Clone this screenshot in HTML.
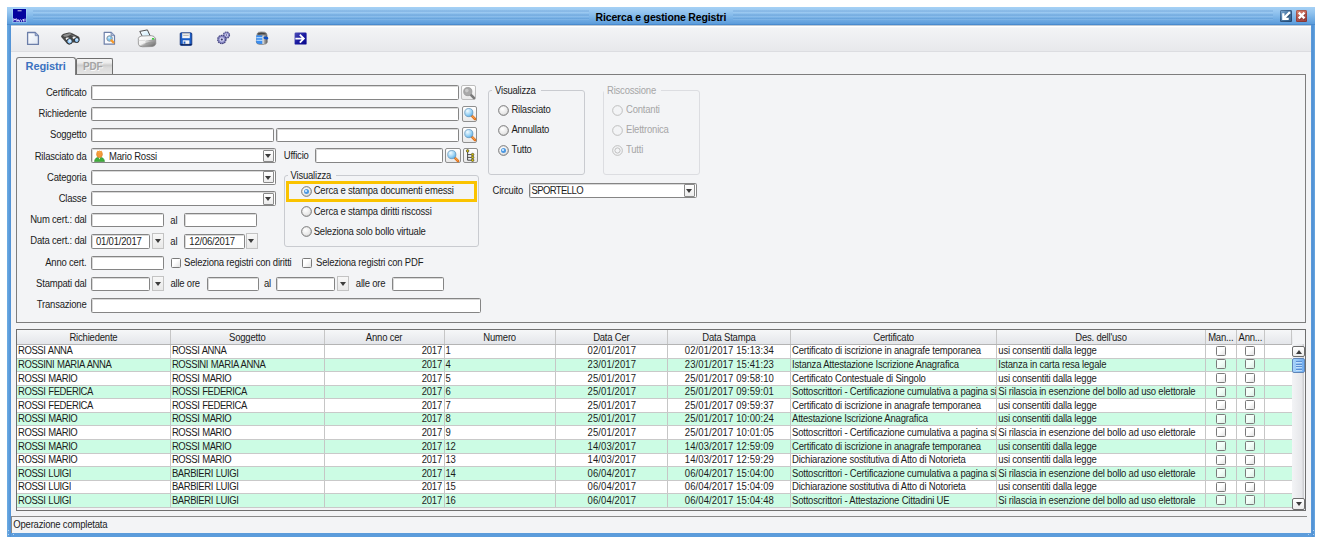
<!DOCTYPE html>
<html><head><meta charset="utf-8"><style>
*{margin:0;padding:0;box-sizing:border-box}
html,body{width:1328px;height:539px;overflow:hidden;background:#fff}
body{position:relative;font-family:"Liberation Sans",sans-serif;font-size:9.5px;letter-spacing:-0.2px;color:#1c1c1c}
.a{position:absolute}
.win{position:absolute;left:7px;top:7px;width:1308px;height:530px;background:linear-gradient(to right,#6eaee4,#5c9cdb 2px,#5494d6 3.5px,#5c9cdb 4px,#5c9cdb calc(100% - 4px),#4f8fd3 calc(100% - 2px),#6aaae2)}
.title{position:absolute;left:7px;top:7px;width:1308px;height:18.3px;background:linear-gradient(to bottom,#a6d1f5 0%,#93c4ef 30%,#79b2e6 60%,#5e9edc 92%,#3f80c6 100%)}
.stripe{position:absolute;height:2.2px;background:linear-gradient(to bottom,rgba(40,100,170,.13),rgba(40,100,170,.13) 55%,rgba(255,255,255,.08) 60%,rgba(255,255,255,.08))}
.ttext{position:absolute;top:11.9px;font-weight:bold;font-size:10.5px;letter-spacing:-0.15px;line-height:11px;color:#000;white-space:nowrap}
.content{position:absolute;left:11px;top:25.3px;width:1300px;height:508px;background:#f3f4f6}
.toolbar{position:absolute;left:11px;top:25px;width:1300px;height:27px;background:linear-gradient(to bottom,#a9b9c9 0,#c8d2dc 0.8px,#ffffff 1.2px,#ffffff 2.2px,#f3f4f6 2.6px,#e8e9ec 96%);border-bottom:1px solid #dcdde1}
.lbl{position:absolute;white-space:nowrap;line-height:11px;height:11px}
.r{text-align:right}
.tf{position:absolute;background:#fff;border:1px solid #858585;border-radius:1.5px;box-shadow:inset 1px 1px 0 #d8d8d8}
.tab{position:absolute}
.panel{position:absolute;border:1px solid #7d7d7d;background:#f3f4f6}
.grp{position:absolute;border:1px solid #c9cbd0;border-radius:3px}
.gt{position:absolute;background:#f3f4f6;padding:0 5px 0 3px;white-space:nowrap;line-height:11px}
.rad{position:absolute;width:11px;height:11px;border-radius:50%;border:1px solid #6f6f6f;background:radial-gradient(circle at 40% 35%,#fff,#e6e6e6 70%,#cfcfcf)}
.rad.sel::after{content:"";position:absolute;left:2px;top:2px;width:5px;height:5px;border-radius:50%;background:radial-gradient(circle at 40% 35%,#b9dcff,#3b8de0)}
.rad.dis{border-color:#b3b3b3;background:#f3f4f6}
.rad.dis.sel::after{background:none;border:1px solid #b3b3b3;left:1px;top:1px;width:7px;height:7px}
.dis{color:#a6a6a6}
.cbx{position:absolute;width:10px;height:10px;border:1px solid #7a7a7a;border-radius:1.5px;background:linear-gradient(135deg,#fff 40%,#e1e1e1)}
.dbtn{position:absolute;border:1px solid #c3c3c3;background:linear-gradient(to bottom,#f7f7f7,#e9e9e9)}
.cbtn{position:absolute;border:1px solid #8a8a8a;border-radius:1px;background:linear-gradient(to bottom,#ffffff,#ececec)}
.tri{position:absolute;width:0;height:0;border-left:3.5px solid transparent;border-right:3.5px solid transparent}
.tri.dn{border-top:4px solid #3c3c3c}
.tri.up{border-bottom:4px solid #3c3c3c}
.sbtn{position:absolute;border:1px solid #8f8f8f;border-radius:2px;background:linear-gradient(to bottom,#fff,#e9e9e9)}
.sbtn.dis2{border-color:#bdbdbd}
/* table */
.tbl{position:absolute;border:1px solid #6f6f6f;background:#f3f4f6;overflow:hidden}
.thead{position:absolute;background:linear-gradient(to bottom,#f6f7f8,#e4e6ea)}
.th{position:absolute;text-align:center;line-height:13.5px;padding-top:0.8px;white-space:nowrap;overflow:hidden}
.tr{position:absolute;left:0;background:#fff}
.tr.g{background:#ccfce4}
.td{position:absolute;white-space:nowrap;overflow:hidden;line-height:13.2px;padding:0 0.6px 0 1.5px}
.td.r{text-align:right;padding-right:2px}
.td.c{text-align:center;letter-spacing:0.1px}
.td.u{letter-spacing:-0.42px;word-spacing:0.6px}
.vl{position:absolute;width:1px;background:#c6c6c6}
.hl{position:absolute;left:0;height:1px;background:#c9c9c9}
.cb{position:absolute;width:10px;height:10px;border:1px solid #7a7a7a;border-radius:1.5px;background:linear-gradient(135deg,#fff 45%,#e3e3e3)}
.cbg{background:linear-gradient(135deg,#f3fff9 45%,#dcefe5)}
.sbtrack{position:absolute;background:linear-gradient(to right,#f3f4f6,#e6e7ea 80%,#c8c9cc)}
.sbbtn{position:absolute;width:12.3px;height:11.6px;border:1px solid #6e6e6e;border-radius:2px;background:linear-gradient(to bottom,#fff,#ececec)}
.sbbtn .tri{left:2.4px;top:3px;border-left-width:3.6px;border-right-width:3.6px}
.sbthumb{position:absolute;width:12.3px;height:14.6px;border:1px solid #5f86b8;border-radius:2px;background:linear-gradient(to right,#a8d4fb,#8cc2f4 50%,#6eaaf0)}
.sbthumb i{position:absolute;left:2.5px;width:6.5px;height:1px;background:#5b8fd2;box-shadow:0 1px 0 rgba(235,246,255,.55)}
.status{position:absolute;left:11.4px;top:516px;width:1295.6px;height:17.3px;border-top:1px solid #8a8a8a;border-left:1px solid #8a8a8a;background:#f3f4f6}
.lbl,.gt,.tf span{transform:scaleY(1.1)}
.td{transform:scaleY(1.1);transform-origin:50% 6.6px}
.th{transform:scaleY(1.1);transform-origin:50% 6.75px}

</style></head><body>
<div class="win"></div>
<div class="title"></div>
<div class="stripe" style="left:33px;top:10.4px;width:556px"></div>
<div class="stripe" style="left:733px;top:10.4px;width:540px"></div>
<div class="stripe" style="left:33px;top:14.4px;width:556px"></div>
<div class="stripe" style="left:733px;top:14.4px;width:540px"></div>
<div class="stripe" style="left:33px;top:18.3px;width:556px"></div>
<div class="stripe" style="left:733px;top:18.3px;width:540px"></div>
<!-- app icon -->
<div class="a" style="left:12px;top:8.2px;width:15px;height:15px;background:rgba(190,230,255,.35);border-radius:1px"></div>
<svg class="a" style="left:12.8px;top:8.9px" width="13.4" height="13.6" viewBox="0 0 13.4 13.6">
 <rect x="0" y="0" width="13.4" height="13.6" fill="#03039e"/>
 <rect x="4.6" y="1.2" width="4" height="1.1" fill="#b8b8e8"/>
 <path d="M0.8 12.6 V9.6 L2 11 L3.2 9.6 V12.6 M4.2 12.6 L5 10.4 L5.8 12.6 M6.6 12.8 Q6.4 10.6 7.6 10.6 M8.6 12.8 Q8.4 10.6 9.6 10.6 M10.6 12.6 V10 M12 12.6 V9.6" stroke="#e4dcff" stroke-width="1" fill="none"/>
</svg>
<div class="ttext" style="left:595.5px">Ricerca e gestione Registri</div>
<!-- title buttons -->
<div class="a" style="left:1280.1px;top:9.9px;width:11.7px;height:11.7px;border-radius:1.5px;background:linear-gradient(135deg,#86afd6 0%,#4d7aa6 45%,#2c5680 100%);box-shadow:inset 0 0 0 0.8px rgba(20,50,90,.55)"></div>
<svg class="a" style="left:1280.1px;top:9.9px" width="11.7" height="11.7" viewBox="0 0 12 12">
 <path d="M9.6 3.4 L5 8" stroke="#1d3550" stroke-width="2.2" fill="none" opacity=".6" transform="translate(0.6,0.6)"/>
 <path d="M9.4 3 L4.6 7.8 M3.4 4.6 V9 H7.8" stroke="#fff" stroke-width="2.3" fill="none" stroke-linecap="square"/>
</svg>
<div class="a" style="left:1295.9px;top:10.1px;width:11.6px;height:11.5px;border-radius:1.5px;background:linear-gradient(160deg,#e0886e 0%,#b85a50 50%,#96403e 100%);box-shadow:inset 0 0 0 0.8px rgba(100,30,30,.45)"></div>
<svg class="a" style="left:1295.9px;top:10.1px" width="11.6" height="11.5" viewBox="0 0 12 12">
 <path d="M3 3.2 L9 9.2 M9 3.2 L3 9.2" stroke="#4a1a1a" stroke-width="2.2" fill="none" opacity=".4" transform="translate(0.5,0.6)"/>
 <path d="M2.8 2.8 L8.8 8.8 M8.8 2.8 L2.8 8.8" stroke="#fff" stroke-width="2.4" fill="none"/>
</svg>

<div class="content"></div>
<div class="toolbar"></div>
<svg class="a" style="left:26px;top:31px" width="14" height="15" viewBox="0 0 14 15">
 <defs><linearGradient id="pg" x1="0" y1="0" x2="1" y2="1"><stop offset="0" stop-color="#ffffff"/><stop offset="1" stop-color="#dfe7f3"/></linearGradient></defs>
 <path d="M1.6 1.5 H9.2 L12.4 4.7 V13.4 H1.6 Z" fill="url(#pg)" stroke="#6b7ea9" stroke-width="1.3" stroke-linejoin="round"/>
 <path d="M9.2 1.5 V4.7 H12.4" fill="#9fb0d3" stroke="#6b7ea9" stroke-width="0.8"/>
</svg>
<svg class="a" style="left:58px;top:30px" width="25" height="18" viewBox="0 0 25 18">
 <path d="M3 6.8 Q3.2 4.6 5.6 3.8 L10.8 2.6 Q12.6 2.3 14.2 3.2 L20.6 6.6 Q22 7.6 21.6 9.6 L20.8 12 Q19.6 13 17.6 12.6 L14 12.6 L13.6 13.6 Q12 14.8 10 14.2 Q8.6 13.6 8 12.6 Z" fill="#464646"/>
 <path d="M5 5.6 Q6 4.4 10.6 3.4 Q12.6 3.1 14 4 L9.2 6.4 Q7.6 7.2 5.8 6.6 Z" fill="#8e8e8e"/>
 <path d="M12.6 4.8 L16.6 5.6 L15.2 6.6 Z" fill="#777"/>
 <ellipse cx="9.6" cy="8.8" rx="2" ry="1.3" fill="#f4f4f4"/>
 <ellipse cx="16.4" cy="7.8" rx="1.9" ry="1.2" fill="#f0f0f0"/>
 <circle cx="11.6" cy="11.3" r="2.7" fill="#93c8f7" stroke="#262626" stroke-width="0.9"/>
 <circle cx="18.7" cy="10.1" r="2.4" fill="#93c8f7" stroke="#262626" stroke-width="0.9"/>
 <circle cx="11.9" cy="10.8" r="1.2" fill="#d6edff"/>
 <circle cx="19" cy="9.6" r="1" fill="#d6edff"/>
</svg>
<svg class="a" style="left:103px;top:31.3px" width="13" height="14.5" viewBox="0 0 13 14.5">
 <path d="M1.2 1.3 H8 L11.5 4.6 V13.2 H1.2 Z" fill="#fbfcff" stroke="#6d7fa8" stroke-width="1.2" stroke-linejoin="round"/>
 <path d="M8 1.3 V4.6 H11.5" fill="#a7b5d4" stroke="#6d7fa8" stroke-width="0.7"/>
 <circle cx="6.6" cy="7.5" r="2.8" fill="#7fc6f0" stroke="#8a8f96" stroke-width="0.9"/>
 <circle cx="6.1" cy="6.8" r="1" fill="#d6f0ff"/>
 <path d="M8.4 9.4 L10.4 11.4" stroke="#f59a2c" stroke-width="2.2" stroke-linecap="round"/>
</svg>
<svg class="a" style="left:134px;top:27px" width="26" height="22" viewBox="0 0 26 22">
 <defs>
  <linearGradient id="prg" x1="0.1" y1="0" x2="0.9" y2="1"><stop offset="0" stop-color="#ffffff"/><stop offset="0.5" stop-color="#f0f0f0"/><stop offset="0.62" stop-color="#a8a8a8"/><stop offset="1" stop-color="#6a6a6a"/></linearGradient>
  <linearGradient id="ppg" x1="0" y1="0" x2="1" y2="1"><stop offset="0" stop-color="#ffffff"/><stop offset="1" stop-color="#bfe6fa"/></linearGradient>
 </defs>
 <path d="M5.8 4.4 L13.4 2.9 L16.6 9.8 L9.2 11.2 Z" fill="url(#ppg)" stroke="#3c3c3c" stroke-width="0.9" stroke-linejoin="round"/>
 <path d="M4.3 11.6 Q4.6 9.4 7.4 9.1 L17.2 8.6 Q20.6 8.8 21.6 11.6 L21.8 16.6 Q21.4 19 18.6 19.5 L8.6 19.8 Q4.8 19.8 4.4 17.2 Z" fill="url(#prg)" stroke="#8a8a8a" stroke-width="0.8"/>
 <path d="M11.5 14.2 L21.7 12.6 M11.5 16.4 L21.6 15.2" stroke="#8f8f8f" stroke-width="0.6"/>
 <path d="M4.6 13.6 L11.2 13.4" stroke="#cfcfcf" stroke-width="0.6"/>
 <rect x="18" y="11" width="2" height="1.6" fill="#3ad43a"/>
</svg>
<svg class="a" style="left:178.8px;top:31.5px" width="14" height="14" viewBox="0 0 14 14">
 <path d="M1.2 1.8 Q1.2 0.8 2.2 0.8 H11.6 Q12.8 0.8 12.8 2 V12.4 Q12.8 13.4 11.8 13.4 H2.2 Q1.2 13.4 1.2 12.4 Z" fill="#1c5fc9" stroke="#0c2a70" stroke-width="0.8"/>
 <rect x="3.2" y="1.2" width="7.6" height="5" fill="#f4f4f4"/>
 <rect x="3.2" y="1.2" width="7.6" height="1" fill="#b8b8b8"/>
 <rect x="4.2" y="3.2" width="5.5" height="0.8" fill="#aaa"/>
 <rect x="3.8" y="8.3" width="6.6" height="4.6" fill="#f7f7f7"/>
 <rect x="4.6" y="9.5" width="1.8" height="2.2" fill="#1c5fc9"/>
 <path d="M1.6 12.4 H12.6" stroke="#0a1f55" stroke-width="1"/>
</svg>
<svg class="a" style="left:212px;top:28px" width="24" height="20" viewBox="0 0 24 20">
 <circle cx="14.4" cy="7.1" r="2.9" fill="#8080bc" stroke="#4c4c86" stroke-width="1.6" stroke-dasharray="1.4 0.6"/>
 <circle cx="14.4" cy="7.1" r="2.5" fill="#8e8ec8"/>
 <circle cx="14.4" cy="7.1" r="1.7" fill="#d8d8f6"/>
 <circle cx="14.4" cy="7.1" r="0.75" fill="#4a4a80"/>
 <circle cx="9.8" cy="11.5" r="3.9" fill="#7878b6" stroke="#464680" stroke-width="1.7" stroke-dasharray="1.5 0.6"/>
 <circle cx="9.8" cy="11.5" r="3.4" fill="#8888c4"/>
 <circle cx="9.8" cy="11.5" r="2.3" fill="#d4d4f4"/>
 <circle cx="9.8" cy="11.5" r="1.05" fill="#363660"/>
</svg>
<svg class="a" style="left:252px;top:28px" width="20" height="20" viewBox="0 0 20 20">
 <defs><linearGradient id="dg" x1="0" y1="0" x2="1" y2="0"><stop offset="0" stop-color="#c8c8c8"/><stop offset="1" stop-color="#5e5e5e"/></linearGradient></defs>
 <path d="M5.2 5.6 Q5.8 4 9 4 L12.5 4.2 Q14.8 4.8 15 7 L15.2 14.5 Q14.5 16.3 11 16.3 L7 16.2 Q4.5 16 4.3 14 Z" fill="#8a8a8a" stroke="#5a5a5a" stroke-width="0.6"/>
 <path d="M6 5.2 Q9 4.4 13.6 5.2 L13.8 6.6 Q9.5 6.1 6.2 6.7 Z" fill="#444"/>
 <path d="M11 7.6 L15 7 L15.2 14.5 Q14.5 16 11 16.1 Z" fill="url(#dg)"/>
 <path d="M4.3 7.2 L10.6 7.6 L10.6 16 L6 15.8 Q4.4 15.4 4.3 14 Z" fill="#3a8ef2"/>
 <path d="M4.4 9.7 H10.5 M4.4 12.3 H10.5" stroke="#d6ecff" stroke-width="0.9"/>
 <path d="M10.9 7.6 V15.9" stroke="#efefef" stroke-width="0.9"/>
 <ellipse cx="13.9" cy="9.9" rx="2.5" ry="1.4" transform="rotate(12 13.9 9.9)" fill="#0b4fc7"/>
</svg>
<svg class="a" style="left:293.6px;top:31.5px" width="13" height="13" viewBox="0 0 13 13">
 <defs><linearGradient id="eg" x1="0" y1="0" x2="1" y2="1"><stop offset="0" stop-color="#5050b8"/><stop offset="0.5" stop-color="#1a1aa0"/><stop offset="1" stop-color="#06068a"/></linearGradient></defs>
 <rect x="0.6" y="0.6" width="12" height="12" rx="1.2" fill="url(#eg)"/>
 <path d="M2.3 6.6 H9.4 M6.5 3.3 L9.8 6.6 L6.5 9.9" stroke="#fff" stroke-width="1.9" fill="none" stroke-linecap="square"/>
</svg>


<!-- tabs -->
<div class="a" style="left:75.5px;top:58px;width:37.2px;height:16px;border:1px solid #6f6f6f;border-top-width:1.5px;border-bottom:none;border-radius:2px 2px 0 0;background:linear-gradient(to bottom,#f4f4f4 0%,#ececec 25%,#cdcdcd 42%,#dcdcdc 60%,#e4e4e4 100%)"></div>
<div class="a" style="left:83px;top:60.5px;font-weight:bold;font-size:10px;color:#a4a4a4;text-shadow:0.8px 0.8px 0 #fafafa;line-height:11px">PDF</div>
<div class="panel" style="left:16px;top:74px;width:1290px;height:249px"></div>
<div class="a" style="left:16px;top:57px;width:60px;height:18px;border:1px solid #7d7d7d;border-bottom:none;border-radius:3px 3px 0 0;background:#f3f4f6"></div>
<div class="a" style="left:25.6px;top:59.6px;font-weight:bold;font-size:11px;letter-spacing:-0.1px;color:#3b72c0;line-height:12px">Registri</div>

<div class="lbl r " style="right:1241.5px;top:87.05px">Certificato</div>
<div class="lbl r " style="right:1241.5px;top:108.25px">Richiedente</div>
<div class="lbl r " style="right:1241.5px;top:129.45px">Soggetto</div>
<div class="lbl r " style="right:1241.5px;top:150.65px">Rilasciato da</div>
<div class="lbl r " style="right:1241.5px;top:171.85px">Categoria</div>
<div class="lbl r " style="right:1241.5px;top:193.05px">Classe</div>
<div class="lbl r " style="right:1241.5px;top:214.25px">Num cert.: dal</div>
<div class="lbl r " style="right:1241.5px;top:235.45px">Data cert.: dal</div>
<div class="lbl r " style="right:1241.5px;top:256.65px">Anno cert.</div>
<div class="lbl r " style="right:1241.5px;top:277.85px">Stampati dal</div>
<div class="lbl r " style="right:1241.5px;top:299.05px">Transazione</div>
<div class="tf" style="left:91px;top:85.3px;width:368px;height:14.5px"></div>
<div class="sbtn dis2" style="left:461px;top:84.7px;width:14.7px;height:15.8px"><svg width="14" height="14" viewBox="0 0 14 14" style="position:absolute;left:0px;top:0px"><path d="M8.4 8.4 L12 12" stroke="#7a7a7a" stroke-width="2.5" stroke-linecap="round"/><circle cx="5.8" cy="5.6" r="4.1" fill="#a9a9a9" stroke="#8c8c8c" stroke-width="0.7"/><circle cx="4.8" cy="4.6" r="1.8" fill="#c9c9c9"/></svg></div>
<div class="tf" style="left:91px;top:106.5px;width:368.4px;height:14.5px"></div>
<div class="sbtn" style="left:461.5px;top:106px;width:15.3px;height:15.8px"><svg width="14" height="14" viewBox="0 0 14 14" style="position:absolute;left:0px;top:0px"><defs><radialGradient id="mgl" cx="0.35" cy="0.3" r="0.75"><stop offset="0" stop-color="#f2fbff"/><stop offset="0.55" stop-color="#a6d8f6"/><stop offset="1" stop-color="#5aaee6"/></radialGradient></defs><path d="M8.4 8.4 L12 12" stroke="#e2731c" stroke-width="2.5" stroke-linecap="round"/><path d="M8.9 8.6 L11.6 11.3" stroke="#ffb766" stroke-width="0.8" stroke-linecap="round"/><circle cx="5.8" cy="5.6" r="4.1" fill="url(#mgl)" stroke="#5b8fb8" stroke-width="0.7"/></svg></div>
<div class="tf" style="left:91px;top:127.7px;width:183px;height:14.5px"></div>
<div class="tf" style="left:276.4px;top:127.7px;width:183px;height:14.5px"></div>
<div class="sbtn" style="left:461.5px;top:127.3px;width:15.3px;height:15.5px"><svg width="14" height="14" viewBox="0 0 14 14" style="position:absolute;left:0px;top:0px"><defs><radialGradient id="mgl" cx="0.35" cy="0.3" r="0.75"><stop offset="0" stop-color="#f2fbff"/><stop offset="0.55" stop-color="#a6d8f6"/><stop offset="1" stop-color="#5aaee6"/></radialGradient></defs><path d="M8.4 8.4 L12 12" stroke="#e2731c" stroke-width="2.5" stroke-linecap="round"/><path d="M8.9 8.6 L11.6 11.3" stroke="#ffb766" stroke-width="0.8" stroke-linecap="round"/><circle cx="5.8" cy="5.6" r="4.1" fill="url(#mgl)" stroke="#5b8fb8" stroke-width="0.7"/></svg></div>
<div class="tf" style="left:91px;top:148.4px;width:185.1px;height:14.5px"><svg width="11" height="12" viewBox="0 0 11 12" style="position:absolute;left:2px;top:0.5px"><path d="M0.5 11.5 Q0.8 7.3 5.5 7.2 Q10.2 7.3 10.5 11.5 Z" fill="#3fae3a" stroke="#2a8a2a" stroke-width="0.6"/><path d="M4.6 7.3 L5.5 9.5 L6.4 7.3 Z" fill="#fff"/><ellipse cx="5.5" cy="4.3" rx="2.9" ry="3.2" fill="#f49a3a" stroke="#d9781c" stroke-width="0.6"/><path d="M2.6 2.6 L3.4 0.6 L4.6 1.8 L5.5 0.5 L6.4 1.8 L7.6 0.6 L8.4 2.6 Z" fill="#f7a84a"/></svg><span style="position:absolute;left:17px;top:1.2px;line-height:11px">Mario Rossi</span></div>
<div class="cbtn" style="left:263.1px;top:149.7px;width:11.3px;height:11.9px"><div class="tri dn" style="left:1.15px;top:3.45px"></div></div>
<div class="lbl " style="left:283.8px;top:150.15px">Ufficio</div>
<div class="tf" style="left:314.6px;top:148.4px;width:128.8px;height:14.5px"></div>
<div class="sbtn" style="left:445.3px;top:147.8px;width:15.3px;height:15px"><svg width="14" height="14" viewBox="0 0 14 14" style="position:absolute;left:0px;top:0px"><defs><radialGradient id="mgl" cx="0.35" cy="0.3" r="0.75"><stop offset="0" stop-color="#f2fbff"/><stop offset="0.55" stop-color="#a6d8f6"/><stop offset="1" stop-color="#5aaee6"/></radialGradient></defs><path d="M8.4 8.4 L12 12" stroke="#e2731c" stroke-width="2.5" stroke-linecap="round"/><path d="M8.9 8.6 L11.6 11.3" stroke="#ffb766" stroke-width="0.8" stroke-linecap="round"/><circle cx="5.8" cy="5.6" r="4.1" fill="url(#mgl)" stroke="#5b8fb8" stroke-width="0.7"/></svg></div>
<div class="sbtn" style="left:462.6px;top:147.8px;width:15px;height:15px"><svg width="13" height="13" viewBox="0 0 13 13" style="position:absolute;left:0.5px;top:0.5px"><path d="M3.6 2.5 V11.2 M3.6 5.6 H7.5 M3.6 8.4 H7.5 M3.6 11.2 H7.5" stroke="#3a3a3a" stroke-width="0.9" fill="none"/><circle cx="3.6" cy="1.9" r="1.3" fill="#d8c200" stroke="#333" stroke-width="0.6"/><circle cx="8.6" cy="5.6" r="1.3" fill="#d8c200" stroke="#333" stroke-width="0.6"/><circle cx="8.6" cy="8.4" r="1.3" fill="#d8c200" stroke="#333" stroke-width="0.6"/><circle cx="8.6" cy="11.2" r="1.3" fill="#d8c200" stroke="#333" stroke-width="0.6"/></svg></div>
<div class="tf" style="left:91px;top:170.1px;width:185.1px;height:14.7px"></div>
<div class="cbtn" style="left:263.1px;top:171.4px;width:11.3px;height:12.1px"><div class="tri dn" style="left:1.15px;top:3.55px"></div></div>
<div class="tf" style="left:91px;top:191.3px;width:185.1px;height:14.9px"></div>
<div class="cbtn" style="left:263.1px;top:192.6px;width:11.3px;height:12.3px"><div class="tri dn" style="left:1.15px;top:3.65px"></div></div>
<div class="tf" style="left:91px;top:212.9px;width:72.6px;height:14.5px"></div>
<div class="lbl " style="left:170.3px;top:214.65px">al</div>
<div class="tf" style="left:184.3px;top:212.9px;width:73px;height:14.5px"></div>
<div class="tf" style="left:91px;top:233.8px;width:59.4px;height:14.8px"><span style="position:absolute;left:4px;top:1.5px;line-height:11px">01/01/2017</span></div>
<div class="dbtn" style="left:152.3px;top:233.4px;width:11.5px;height:15.4px"><div class="tri dn" style="left:1.25px;top:4.7px"></div></div>
<div class="lbl " style="left:170.3px;top:235.55px">al</div>
<div class="tf" style="left:184.3px;top:233.8px;width:60.3px;height:14.8px"><span style="position:absolute;left:4px;top:1.5px;line-height:11px">12/06/2017</span></div>
<div class="dbtn" style="left:246px;top:233.4px;width:11.5px;height:15.4px"><div class="tri dn" style="left:1.25px;top:4.7px"></div></div>
<div class="tf" style="left:91px;top:255.5px;width:72.6px;height:14.5px"></div>
<div class="cbx" style="left:171px;top:257.5px"></div>
<div class="lbl " style="left:184px;top:257.25px">Seleziona registri con diritti</div>
<div class="cbx" style="left:302.4px;top:257.5px"></div>
<div class="lbl " style="left:316px;top:257.25px">Seleziona registri con PDF</div>
<div class="tf" style="left:91px;top:276.6px;width:59.4px;height:14.7px"></div>
<div class="dbtn" style="left:152.3px;top:276.4px;width:11.5px;height:15.1px"><div class="tri dn" style="left:1.25px;top:4.55px"></div></div>
<div class="lbl " style="left:170.4px;top:278.15px">alle ore</div>
<div class="tf" style="left:206.6px;top:276.6px;width:52.2px;height:14.7px"></div>
<div class="lbl " style="left:263.9px;top:278.15px">al</div>
<div class="tf" style="left:276.3px;top:276.6px;width:59.2px;height:14.7px"></div>
<div class="dbtn" style="left:337.3px;top:276.4px;width:11.7px;height:15.1px"><div class="tri dn" style="left:1.35px;top:4.55px"></div></div>
<div class="lbl " style="left:355.8px;top:278.15px">alle ore</div>
<div class="tf" style="left:392px;top:276.6px;width:52.3px;height:14.7px"></div>
<div class="tf" style="left:91px;top:297.5px;width:389.5px;height:15px"></div>
<div class="grp" style="left:283.5px;top:174.5px;width:195.5px;height:72.5px"></div>
<div class="gt" style="left:287.5px;top:169.5px">Visualizza</div>
<div class="a" style="left:286.2px;top:181px;width:191px;height:20.6px;border:3px solid #fac300"></div>
<svg class="a" style="left:300.8px;top:185.7px" width="11" height="11" viewBox="0 0 11 11"><defs><radialGradient id="rg0" cx="0.4" cy="0.35" r="0.7"><stop offset="0" stop-color="#ffffff"/><stop offset="0.7" stop-color="#e8e8e8"/><stop offset="1" stop-color="#cfcfcf"/></radialGradient></defs><circle cx="5.5" cy="5.5" r="4.85" fill="url(#rg0)" stroke="#6a6a6a" stroke-width="0.9"/><circle cx="5.5" cy="5.5" r="2.5" fill="#4b97e0"/><circle cx="5" cy="4.9" r="1.2" fill="#bfe0ff"/></svg>
<div class="lbl" style="left:313.7px;top:185.4px">Cerca e stampa documenti emessi</div>
<svg class="a" style="left:300.8px;top:206.1px" width="11" height="11" viewBox="0 0 11 11"><defs><radialGradient id="rg1" cx="0.4" cy="0.35" r="0.7"><stop offset="0" stop-color="#ffffff"/><stop offset="0.7" stop-color="#e8e8e8"/><stop offset="1" stop-color="#cfcfcf"/></radialGradient></defs><circle cx="5.5" cy="5.5" r="4.85" fill="url(#rg1)" stroke="#6a6a6a" stroke-width="0.9"/></svg>
<div class="lbl" style="left:313.7px;top:205.8px">Cerca e stampa diritti riscossi</div>
<svg class="a" style="left:300.8px;top:226.3px" width="11" height="11" viewBox="0 0 11 11"><defs><radialGradient id="rg2" cx="0.4" cy="0.35" r="0.7"><stop offset="0" stop-color="#ffffff"/><stop offset="0.7" stop-color="#e8e8e8"/><stop offset="1" stop-color="#cfcfcf"/></radialGradient></defs><circle cx="5.5" cy="5.5" r="4.85" fill="url(#rg2)" stroke="#6a6a6a" stroke-width="0.9"/></svg>
<div class="lbl" style="left:313.7px;top:226px">Seleziona solo bollo virtuale</div>
<div class="grp" style="left:487.7px;top:89.5px;width:97.7px;height:85.5px"></div>
<div class="gt" style="left:492px;top:84.5px">Visualizza</div>
<svg class="a" style="left:497.6px;top:104.5px" width="11" height="11" viewBox="0 0 11 11"><defs><radialGradient id="rg3" cx="0.4" cy="0.35" r="0.7"><stop offset="0" stop-color="#ffffff"/><stop offset="0.7" stop-color="#e8e8e8"/><stop offset="1" stop-color="#cfcfcf"/></radialGradient></defs><circle cx="5.5" cy="5.5" r="4.85" fill="url(#rg3)" stroke="#6a6a6a" stroke-width="0.9"/></svg>
<div class="lbl" style="left:511.4px;top:103.7px">Rilasciato</div>
<svg class="a" style="left:497.6px;top:124.6px" width="11" height="11" viewBox="0 0 11 11"><defs><radialGradient id="rg4" cx="0.4" cy="0.35" r="0.7"><stop offset="0" stop-color="#ffffff"/><stop offset="0.7" stop-color="#e8e8e8"/><stop offset="1" stop-color="#cfcfcf"/></radialGradient></defs><circle cx="5.5" cy="5.5" r="4.85" fill="url(#rg4)" stroke="#6a6a6a" stroke-width="0.9"/></svg>
<div class="lbl" style="left:511.4px;top:123.8px">Annullato</div>
<svg class="a" style="left:497.6px;top:144.8px" width="11" height="11" viewBox="0 0 11 11"><defs><radialGradient id="rg5" cx="0.4" cy="0.35" r="0.7"><stop offset="0" stop-color="#ffffff"/><stop offset="0.7" stop-color="#e8e8e8"/><stop offset="1" stop-color="#cfcfcf"/></radialGradient></defs><circle cx="5.5" cy="5.5" r="4.85" fill="url(#rg5)" stroke="#6a6a6a" stroke-width="0.9"/><circle cx="5.5" cy="5.5" r="2.5" fill="#4b97e0"/><circle cx="5" cy="4.9" r="1.2" fill="#bfe0ff"/></svg>
<div class="lbl" style="left:511.4px;top:144px">Tutto</div>
<div class="grp" style="left:602.5px;top:89.5px;width:97.5px;height:85.5px;border-color:#dcdde1"></div>
<div class="gt dis" style="left:604px;top:84.5px">Riscossione</div>
<svg class="a" style="left:612.3px;top:104.5px" width="11" height="11" viewBox="0 0 11 11"><circle cx="5.5" cy="5.5" r="4.85" fill="#f3f4f6" stroke="#b9b9b9" stroke-width="0.9"/></svg>
<div class="lbl dis" style="left:626px;top:103.7px">Contanti</div>
<svg class="a" style="left:612.3px;top:124.6px" width="11" height="11" viewBox="0 0 11 11"><circle cx="5.5" cy="5.5" r="4.85" fill="#f3f4f6" stroke="#b9b9b9" stroke-width="0.9"/></svg>
<div class="lbl dis" style="left:626px;top:123.8px">Elettronica</div>
<svg class="a" style="left:612.3px;top:144.8px" width="11" height="11" viewBox="0 0 11 11"><circle cx="5.5" cy="5.5" r="4.85" fill="#f3f4f6" stroke="#b9b9b9" stroke-width="0.9"/><circle cx="5.5" cy="5.5" r="2.6" fill="none" stroke="#b9b9b9" stroke-width="0.9"/></svg>
<div class="lbl dis" style="left:626px;top:144px">Tutti</div>
<div class="lbl " style="left:492.5px;top:184.9px">Circuito</div>
<div class="tf" style="left:529px;top:182.8px;width:167.6px;height:15.2px"><span style="position:absolute;left:1.5px;top:1.5px;line-height:11px;letter-spacing:-0.6px">SPORTELLO</span></div>
<div class="cbtn" style="left:683.6px;top:184.1px;width:11.3px;height:12.6px"><div class="tri dn" style="left:1.15px;top:3.8px"></div></div>

<div class="tbl" style="left:16px;top:328.8px;width:1289.5px;height:182.2px">
<div class="thead" style="left:0;top:0;width:1275.7px;height:14.7px"></div>
<div class="th" style="left:-0.5px;width:153.9px;top:0;height:14.7px">Richiedente</div>
<div class="th" style="left:153.4px;width:153.8px;top:0;height:14.7px">Soggetto</div>
<div class="th" style="left:307.2px;width:119.8px;top:0;height:14.7px">Anno cer</div>
<div class="th" style="left:427px;width:111.3px;top:0;height:14.7px">Numero</div>
<div class="th" style="left:538.3px;width:112.1px;top:0;height:14.7px">Data Cer</div>
<div class="th" style="left:650.4px;width:123.1px;top:0;height:14.7px">Data Stampa</div>
<div class="th" style="left:773.5px;width:206.3px;top:0;height:14.7px">Certificato</div>
<div class="th" style="left:979.8px;width:208.4px;top:0;height:14.7px">Des. dell'uso</div>
<div class="th" style="left:1188.2px;width:31.1px;top:0;height:14.7px">Man...</div>
<div class="th" style="left:1219.3px;width:28.1px;top:0;height:14.7px">Ann...</div>
<div class="th" style="left:1247.4px;width:27.3px;top:0;height:14.7px"></div>
<div class="tr" style="top:14.7px;width:1275.7px;height:13.58px"></div>
<div class="td l u" style="left:-0.5px;width:153.9px;top:14.7px;height:13.58px">ROSSI ANNA</div>
<div class="td l u" style="left:153.4px;width:153.8px;top:14.7px;height:13.58px">ROSSI ANNA</div>
<div class="td r" style="left:307.2px;width:119.8px;top:14.7px;height:13.58px">2017</div>
<div class="td l" style="left:427px;width:111.3px;top:14.7px;height:13.58px">1</div>
<div class="td c" style="left:538.3px;width:112.1px;top:14.7px;height:13.58px">02/01/2017</div>
<div class="td c" style="left:650.4px;width:123.1px;top:14.7px;height:13.58px">02/01/2017 15:13:34</div>
<div class="td l" style="left:773.5px;width:206.3px;top:14.7px;height:13.58px">Certificato di iscrizione in anagrafe temporanea</div>
<div class="td l" style="left:979.8px;width:208.4px;top:14.7px;height:13.58px">usi consentiti dalla legge</div>
<div class="cb" style="left:1198.75px;top:16.1px"></div>
<div class="cb" style="left:1228.35px;top:16.1px"></div>
<div class="tr g" style="top:28.28px;width:1275.7px;height:13.58px"></div>
<div class="td l u" style="left:-0.5px;width:153.9px;top:28.28px;height:13.58px">ROSSINI MARIA ANNA</div>
<div class="td l u" style="left:153.4px;width:153.8px;top:28.28px;height:13.58px">ROSSINI MARIA ANNA</div>
<div class="td r" style="left:307.2px;width:119.8px;top:28.28px;height:13.58px">2017</div>
<div class="td l" style="left:427px;width:111.3px;top:28.28px;height:13.58px">4</div>
<div class="td c" style="left:538.3px;width:112.1px;top:28.28px;height:13.58px">23/01/2017</div>
<div class="td c" style="left:650.4px;width:123.1px;top:28.28px;height:13.58px">23/01/2017 15:41:23</div>
<div class="td l" style="left:773.5px;width:206.3px;top:28.28px;height:13.58px">Istanza Attestazione Iscrizione Anagrafica</div>
<div class="td l" style="left:979.8px;width:208.4px;top:28.28px;height:13.58px">Istanza in carta resa legale</div>
<div class="cb cbg" style="left:1198.75px;top:29.68px"></div>
<div class="cb cbg" style="left:1228.35px;top:29.68px"></div>
<div class="tr" style="top:41.86px;width:1275.7px;height:13.58px"></div>
<div class="td l u" style="left:-0.5px;width:153.9px;top:41.86px;height:13.58px">ROSSI MARIO</div>
<div class="td l u" style="left:153.4px;width:153.8px;top:41.86px;height:13.58px">ROSSI MARIO</div>
<div class="td r" style="left:307.2px;width:119.8px;top:41.86px;height:13.58px">2017</div>
<div class="td l" style="left:427px;width:111.3px;top:41.86px;height:13.58px">5</div>
<div class="td c" style="left:538.3px;width:112.1px;top:41.86px;height:13.58px">25/01/2017</div>
<div class="td c" style="left:650.4px;width:123.1px;top:41.86px;height:13.58px">25/01/2017 09:58:10</div>
<div class="td l" style="left:773.5px;width:206.3px;top:41.86px;height:13.58px">Certificato Contestuale di Singolo</div>
<div class="td l" style="left:979.8px;width:208.4px;top:41.86px;height:13.58px">usi consentiti dalla legge</div>
<div class="cb" style="left:1198.75px;top:43.26px"></div>
<div class="cb" style="left:1228.35px;top:43.26px"></div>
<div class="tr g" style="top:55.44px;width:1275.7px;height:13.58px"></div>
<div class="td l u" style="left:-0.5px;width:153.9px;top:55.44px;height:13.58px">ROSSI FEDERICA</div>
<div class="td l u" style="left:153.4px;width:153.8px;top:55.44px;height:13.58px">ROSSI FEDERICA</div>
<div class="td r" style="left:307.2px;width:119.8px;top:55.44px;height:13.58px">2017</div>
<div class="td l" style="left:427px;width:111.3px;top:55.44px;height:13.58px">6</div>
<div class="td c" style="left:538.3px;width:112.1px;top:55.44px;height:13.58px">25/01/2017</div>
<div class="td c" style="left:650.4px;width:123.1px;top:55.44px;height:13.58px">25/01/2017 09:59:01</div>
<div class="td l" style="left:773.5px;width:206.3px;top:55.44px;height:13.58px">Sottoscrittori - Certificazione cumulativa a pagina singola</div>
<div class="td l" style="left:979.8px;width:208.4px;top:55.44px;height:13.58px">Si rilascia in esenzione del bollo ad uso elettorale</div>
<div class="cb cbg" style="left:1198.75px;top:56.84px"></div>
<div class="cb cbg" style="left:1228.35px;top:56.84px"></div>
<div class="tr" style="top:69.02px;width:1275.7px;height:13.58px"></div>
<div class="td l u" style="left:-0.5px;width:153.9px;top:69.02px;height:13.58px">ROSSI FEDERICA</div>
<div class="td l u" style="left:153.4px;width:153.8px;top:69.02px;height:13.58px">ROSSI FEDERICA</div>
<div class="td r" style="left:307.2px;width:119.8px;top:69.02px;height:13.58px">2017</div>
<div class="td l" style="left:427px;width:111.3px;top:69.02px;height:13.58px">7</div>
<div class="td c" style="left:538.3px;width:112.1px;top:69.02px;height:13.58px">25/01/2017</div>
<div class="td c" style="left:650.4px;width:123.1px;top:69.02px;height:13.58px">25/01/2017 09:59:37</div>
<div class="td l" style="left:773.5px;width:206.3px;top:69.02px;height:13.58px">Certificato di iscrizione in anagrafe temporanea</div>
<div class="td l" style="left:979.8px;width:208.4px;top:69.02px;height:13.58px">usi consentiti dalla legge</div>
<div class="cb" style="left:1198.75px;top:70.42px"></div>
<div class="cb" style="left:1228.35px;top:70.42px"></div>
<div class="tr g" style="top:82.6px;width:1275.7px;height:13.58px"></div>
<div class="td l u" style="left:-0.5px;width:153.9px;top:82.6px;height:13.58px">ROSSI MARIO</div>
<div class="td l u" style="left:153.4px;width:153.8px;top:82.6px;height:13.58px">ROSSI MARIO</div>
<div class="td r" style="left:307.2px;width:119.8px;top:82.6px;height:13.58px">2017</div>
<div class="td l" style="left:427px;width:111.3px;top:82.6px;height:13.58px">8</div>
<div class="td c" style="left:538.3px;width:112.1px;top:82.6px;height:13.58px">25/01/2017</div>
<div class="td c" style="left:650.4px;width:123.1px;top:82.6px;height:13.58px">25/01/2017 10:00:24</div>
<div class="td l" style="left:773.5px;width:206.3px;top:82.6px;height:13.58px">Attestazione Iscrizione Anagrafica</div>
<div class="td l" style="left:979.8px;width:208.4px;top:82.6px;height:13.58px">usi consentiti dalla legge</div>
<div class="cb cbg" style="left:1198.75px;top:84px"></div>
<div class="cb cbg" style="left:1228.35px;top:84px"></div>
<div class="tr" style="top:96.18px;width:1275.7px;height:13.58px"></div>
<div class="td l u" style="left:-0.5px;width:153.9px;top:96.18px;height:13.58px">ROSSI MARIO</div>
<div class="td l u" style="left:153.4px;width:153.8px;top:96.18px;height:13.58px">ROSSI MARIO</div>
<div class="td r" style="left:307.2px;width:119.8px;top:96.18px;height:13.58px">2017</div>
<div class="td l" style="left:427px;width:111.3px;top:96.18px;height:13.58px">9</div>
<div class="td c" style="left:538.3px;width:112.1px;top:96.18px;height:13.58px">25/01/2017</div>
<div class="td c" style="left:650.4px;width:123.1px;top:96.18px;height:13.58px">25/01/2017 10:01:05</div>
<div class="td l" style="left:773.5px;width:206.3px;top:96.18px;height:13.58px">Sottoscrittori - Certificazione cumulativa a pagina singola</div>
<div class="td l" style="left:979.8px;width:208.4px;top:96.18px;height:13.58px">Si rilascia in esenzione del bollo ad uso elettorale</div>
<div class="cb" style="left:1198.75px;top:97.58px"></div>
<div class="cb" style="left:1228.35px;top:97.58px"></div>
<div class="tr g" style="top:109.76px;width:1275.7px;height:13.58px"></div>
<div class="td l u" style="left:-0.5px;width:153.9px;top:109.76px;height:13.58px">ROSSI MARIO</div>
<div class="td l u" style="left:153.4px;width:153.8px;top:109.76px;height:13.58px">ROSSI MARIO</div>
<div class="td r" style="left:307.2px;width:119.8px;top:109.76px;height:13.58px">2017</div>
<div class="td l" style="left:427px;width:111.3px;top:109.76px;height:13.58px">12</div>
<div class="td c" style="left:538.3px;width:112.1px;top:109.76px;height:13.58px">14/03/2017</div>
<div class="td c" style="left:650.4px;width:123.1px;top:109.76px;height:13.58px">14/03/2017 12:59:09</div>
<div class="td l" style="left:773.5px;width:206.3px;top:109.76px;height:13.58px">Certificato di iscrizione in anagrafe temporanea</div>
<div class="td l" style="left:979.8px;width:208.4px;top:109.76px;height:13.58px">usi consentiti dalla legge</div>
<div class="cb cbg" style="left:1198.75px;top:111.16px"></div>
<div class="cb cbg" style="left:1228.35px;top:111.16px"></div>
<div class="tr" style="top:123.34px;width:1275.7px;height:13.58px"></div>
<div class="td l u" style="left:-0.5px;width:153.9px;top:123.34px;height:13.58px">ROSSI MARIO</div>
<div class="td l u" style="left:153.4px;width:153.8px;top:123.34px;height:13.58px">ROSSI MARIO</div>
<div class="td r" style="left:307.2px;width:119.8px;top:123.34px;height:13.58px">2017</div>
<div class="td l" style="left:427px;width:111.3px;top:123.34px;height:13.58px">13</div>
<div class="td c" style="left:538.3px;width:112.1px;top:123.34px;height:13.58px">14/03/2017</div>
<div class="td c" style="left:650.4px;width:123.1px;top:123.34px;height:13.58px">14/03/2017 12:59:29</div>
<div class="td l" style="left:773.5px;width:206.3px;top:123.34px;height:13.58px">Dichiarazione sostitutiva di Atto di Notorieta</div>
<div class="td l" style="left:979.8px;width:208.4px;top:123.34px;height:13.58px">usi consentiti dalla legge</div>
<div class="cb" style="left:1198.75px;top:124.74px"></div>
<div class="cb" style="left:1228.35px;top:124.74px"></div>
<div class="tr g" style="top:136.92px;width:1275.7px;height:13.58px"></div>
<div class="td l u" style="left:-0.5px;width:153.9px;top:136.92px;height:13.58px">ROSSI LUIGI</div>
<div class="td l u" style="left:153.4px;width:153.8px;top:136.92px;height:13.58px">BARBIERI LUIGI</div>
<div class="td r" style="left:307.2px;width:119.8px;top:136.92px;height:13.58px">2017</div>
<div class="td l" style="left:427px;width:111.3px;top:136.92px;height:13.58px">14</div>
<div class="td c" style="left:538.3px;width:112.1px;top:136.92px;height:13.58px">06/04/2017</div>
<div class="td c" style="left:650.4px;width:123.1px;top:136.92px;height:13.58px">06/04/2017 15:04:00</div>
<div class="td l" style="left:773.5px;width:206.3px;top:136.92px;height:13.58px">Sottoscrittori - Certificazione cumulativa a pagina singola</div>
<div class="td l" style="left:979.8px;width:208.4px;top:136.92px;height:13.58px">Si rilascia in esenzione del bollo ad uso elettorale</div>
<div class="cb cbg" style="left:1198.75px;top:138.32px"></div>
<div class="cb cbg" style="left:1228.35px;top:138.32px"></div>
<div class="tr" style="top:150.5px;width:1275.7px;height:13.58px"></div>
<div class="td l u" style="left:-0.5px;width:153.9px;top:150.5px;height:13.58px">ROSSI LUIGI</div>
<div class="td l u" style="left:153.4px;width:153.8px;top:150.5px;height:13.58px">BARBIERI LUIGI</div>
<div class="td r" style="left:307.2px;width:119.8px;top:150.5px;height:13.58px">2017</div>
<div class="td l" style="left:427px;width:111.3px;top:150.5px;height:13.58px">15</div>
<div class="td c" style="left:538.3px;width:112.1px;top:150.5px;height:13.58px">06/04/2017</div>
<div class="td c" style="left:650.4px;width:123.1px;top:150.5px;height:13.58px">06/04/2017 15:04:09</div>
<div class="td l" style="left:773.5px;width:206.3px;top:150.5px;height:13.58px">Dichiarazione sostitutiva di Atto di Notorieta</div>
<div class="td l" style="left:979.8px;width:208.4px;top:150.5px;height:13.58px">usi consentiti dalla legge</div>
<div class="cb" style="left:1198.75px;top:151.9px"></div>
<div class="cb" style="left:1228.35px;top:151.9px"></div>
<div class="tr g" style="top:164.08px;width:1275.7px;height:13.58px"></div>
<div class="td l u" style="left:-0.5px;width:153.9px;top:164.08px;height:13.58px">ROSSI LUIGI</div>
<div class="td l u" style="left:153.4px;width:153.8px;top:164.08px;height:13.58px">BARBIERI LUIGI</div>
<div class="td r" style="left:307.2px;width:119.8px;top:164.08px;height:13.58px">2017</div>
<div class="td l" style="left:427px;width:111.3px;top:164.08px;height:13.58px">16</div>
<div class="td c" style="left:538.3px;width:112.1px;top:164.08px;height:13.58px">06/04/2017</div>
<div class="td c" style="left:650.4px;width:123.1px;top:164.08px;height:13.58px">06/04/2017 15:04:48</div>
<div class="td l" style="left:773.5px;width:206.3px;top:164.08px;height:13.58px">Sottoscrittori - Attestazione Cittadini UE</div>
<div class="td l" style="left:979.8px;width:208.4px;top:164.08px;height:13.58px">Si rilascia in esenzione del bollo ad uso elettorale</div>
<div class="cb cbg" style="left:1198.75px;top:165.48px"></div>
<div class="cb cbg" style="left:1228.35px;top:165.48px"></div>
<div class="vl" style="left:1274.2px;top:0;height:14.7px"></div>
<div class="vl" style="left:152.9px;top:0;height:177.66px"></div>
<div class="vl" style="left:306.7px;top:0;height:177.66px"></div>
<div class="vl" style="left:426.5px;top:0;height:177.66px"></div>
<div class="vl" style="left:537.8px;top:0;height:177.66px"></div>
<div class="vl" style="left:649.9px;top:0;height:177.66px"></div>
<div class="vl" style="left:773px;top:0;height:177.66px"></div>
<div class="vl" style="left:979.3px;top:0;height:177.66px"></div>
<div class="vl" style="left:1187.7px;top:0;height:177.66px"></div>
<div class="vl" style="left:1218.8px;top:0;height:177.66px"></div>
<div class="vl" style="left:1246.9px;top:0;height:177.66px"></div>
<div class="hl" style="top:14.4px;width:1274.7px;background:#b4b4b4"></div>
<div class="hl" style="top:27.78px;width:1275.7px"></div>
<div class="hl" style="top:41.36px;width:1275.7px"></div>
<div class="hl" style="top:54.94px;width:1275.7px"></div>
<div class="hl" style="top:68.52px;width:1275.7px"></div>
<div class="hl" style="top:82.1px;width:1275.7px"></div>
<div class="hl" style="top:95.68px;width:1275.7px"></div>
<div class="hl" style="top:109.26px;width:1275.7px"></div>
<div class="hl" style="top:122.84px;width:1275.7px"></div>
<div class="hl" style="top:136.42px;width:1275.7px"></div>
<div class="hl" style="top:150px;width:1275.7px"></div>
<div class="hl" style="top:163.58px;width:1275.7px"></div>
<div class="hl" style="top:177.16px;width:1275.7px"></div>
<div class="sbtrack" style="left:1274.7px;top:14.7px;width:12.8px;height:166.5px"></div>
<div class="sbbtn" style="left:1275.4px;top:15.8px"><div class="tri up"></div></div>
<div class="sbthumb" style="left:1275.4px;top:28.2px"><i style="top:2.5px"></i><i style="top:5px"></i><i style="top:7.5px"></i><i style="top:10px"></i></div>
<div class="sbbtn" style="left:1275.4px;top:168.6px"><div class="tri dn"></div></div>
</div>

<div class="status"></div>
<div class="lbl" style="left:13.3px;top:519px">Operazione completata</div>
<div class="a" style="left:8px;top:530px;width:1.4px;height:1.4px;background:rgba(255,255,255,.55)"></div>
<div class="a" style="left:8px;top:534px;width:1.4px;height:1.4px;background:rgba(255,255,255,.55)"></div>
<div class="a" style="left:12.5px;top:534px;width:1.4px;height:1.4px;background:rgba(255,255,255,.55)"></div>
<div class="a" style="left:1308px;top:534px;width:1.4px;height:1.4px;background:rgba(255,255,255,.55)"></div>
<div class="a" style="left:1312.5px;top:534px;width:1.4px;height:1.4px;background:rgba(255,255,255,.55)"></div>
<div class="a" style="left:1312.5px;top:530px;width:1.4px;height:1.4px;background:rgba(255,255,255,.55)"></div>

</body></html>
